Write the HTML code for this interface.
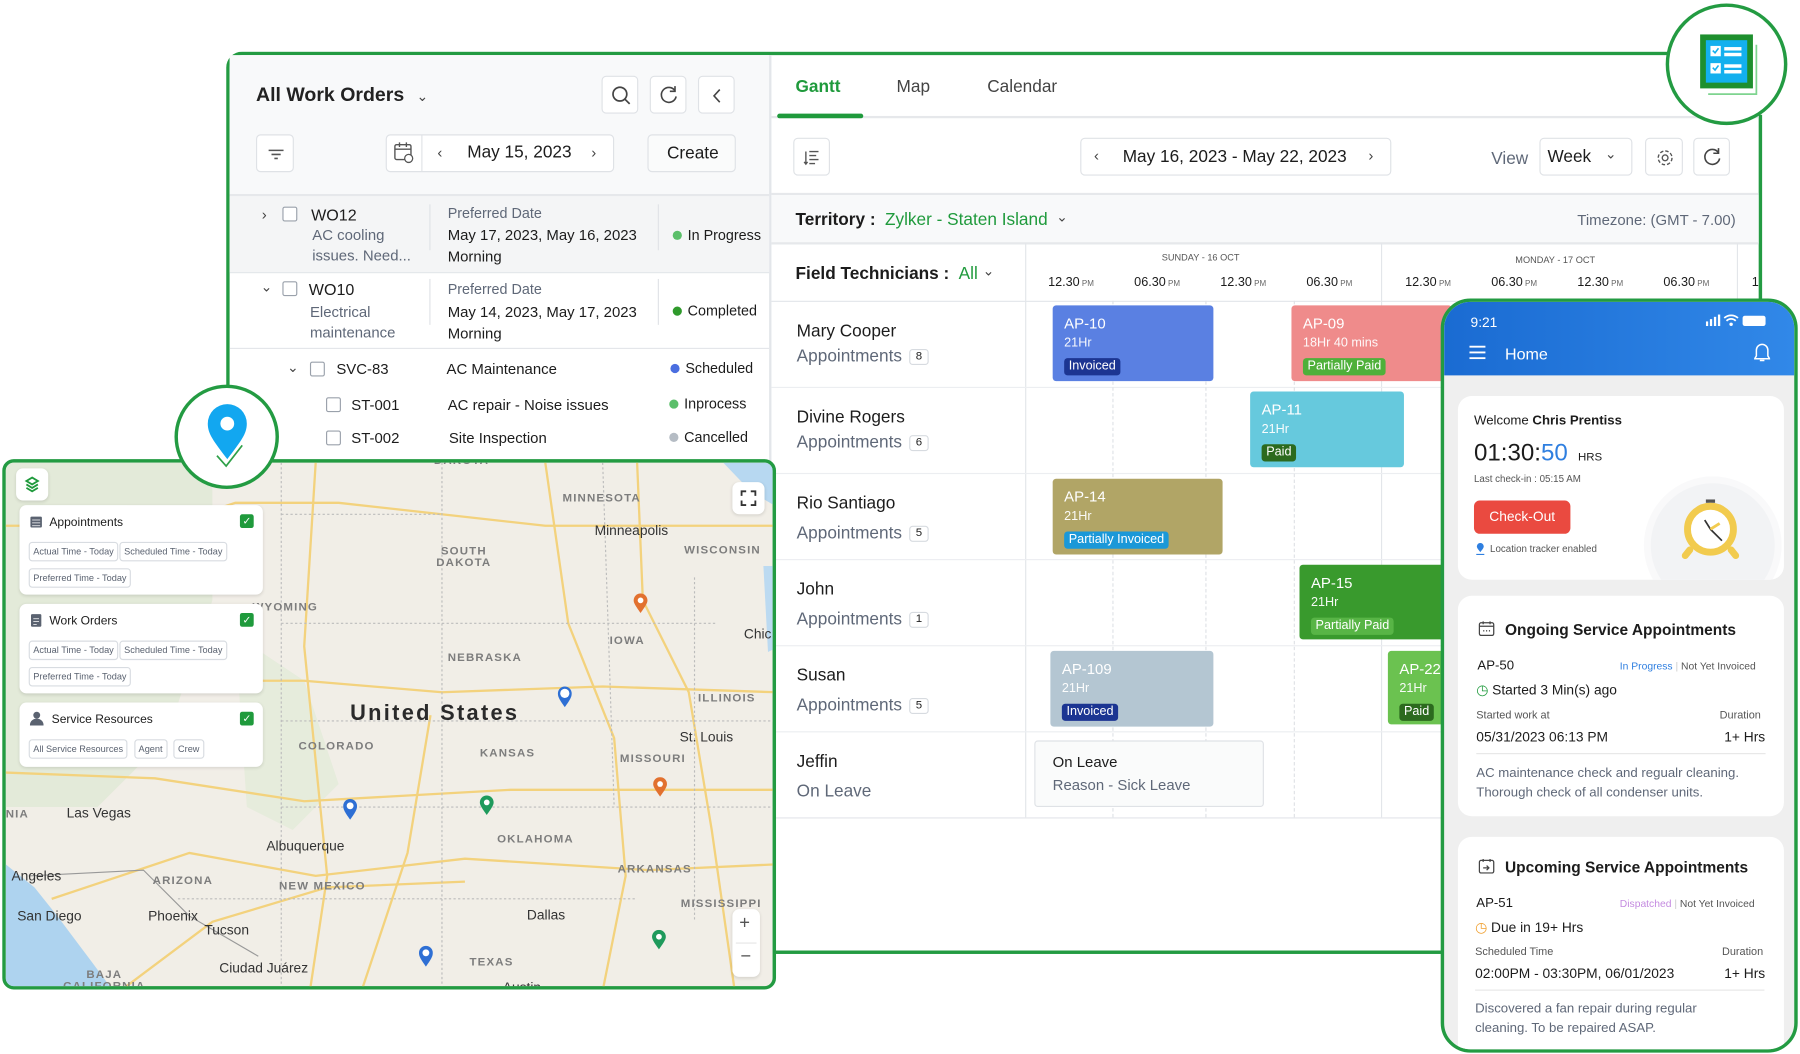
<!DOCTYPE html>
<html><head><meta charset="utf-8">
<style>
*{box-sizing:border-box;margin:0;padding:0}
html,body{width:1800px;height:1054px;overflow:hidden;background:#fff;font-family:"Liberation Sans",sans-serif;color:#1c1c1c}
.s{position:absolute;left:0;top:0;width:1568px;height:918px;transform:scale(1.14796);transform-origin:0 0}
.a{position:absolute}
.t{position:absolute;white-space:nowrap;line-height:1}
.g{color:#5f6878}
.btn{position:absolute;border:1px solid #dfe2e6;border-radius:4px;background:#fff}
.cb{position:absolute;width:13px;height:13px;border:1.3px solid #9aa1ab;border-radius:2px;background:#fff}
.dot{display:inline-block;width:8px;height:8px;border-radius:50%;margin-right:5px;vertical-align:0}
.bar{position:absolute;border-radius:3px;color:#fff;padding:9px 10px;font-size:13px;line-height:1;white-space:nowrap;overflow:hidden}
.bar .h{margin-top:6px;opacity:.95;font-size:11px}
.bdg{display:inline-block;margin-top:7px;padding:2px 4px;border-radius:3px;font-size:11px}
.cnt{display:inline-block;border:1px solid #d7dbe0;border-radius:3px;font-size:10px;padding:1px 5px;color:#222;margin-left:6px;vertical-align:2px}
.ml{position:absolute;white-space:nowrap;color:#7d7d7d;font-size:10px;font-weight:bold;letter-spacing:1px;line-height:1}
.mc{position:absolute;white-space:nowrap;color:#333;font-size:12px;line-height:1}
.card{position:absolute;background:#fff;border-radius:6px;box-shadow:0 1px 3px rgba(0,0,0,.12)}
.chip{display:inline-block;border:1px solid #d8dce1;border-radius:3px;font-size:8px;color:#5a6270;padding:3px 3px;margin:0 1px 4px 0;background:#fff}
.gck{position:absolute;width:12px;height:12px;background:#1f9a3c;border-radius:2px;color:#fff;font-size:9px;text-align:center;line-height:12px}
.pc{position:absolute;background:#fff;border-radius:12px}
.ro{font-family:"Liberation Sans",sans-serif}
</style></head><body><div class="s">

<!-- main panel -->
<div class="a" style="left:197px;top:45px;width:1338px;height:786px;border:3px solid #239b42;border-right:none;border-radius:14px 0 0 0;background:#fff"></div>
<div class="a" style="left:1532px;top:100px;width:3px;height:731px;background:#239b42"></div>
<div class="a" style="left:200px;top:48px;width:470px;height:122px;background:#f8f9fa"></div>
<div class="a" style="left:670px;top:48px;width:2px;height:780px;background:#e3e6ea"></div>

<!-- Work orders header -->
<div class="t" style="left:223px;top:74px;font-size:17px;font-weight:bold;color:#222">All Work Orders <span style="font-weight:normal;font-size:12px;margin-left:6px;color:#444">&#8964;</span></div>
<div class="btn" style="left:524px;top:66px;width:32px;height:33px"><svg width="32" height="33"><circle cx="15" cy="15" r="6" fill="none" stroke="#444" stroke-width="1.5"/><path d="M19.5 19.5l4 4" stroke="#444" stroke-width="1.5"/></svg></div>
<div class="btn" style="left:566px;top:66px;width:32px;height:33px"><svg width="32" height="33"><path d="M21 12a6.5 6.5 0 1 0 1 5" fill="none" stroke="#444" stroke-width="1.4"/><path d="M21 8v4.5h-4.5" fill="none" stroke="#444" stroke-width="1.4"/></svg></div>
<div class="btn" style="left:608px;top:66px;width:32px;height:33px"><svg width="32" height="33"><path d="M18 11l-5 5.5 5 5.5" fill="none" stroke="#444" stroke-width="1.4"/></svg></div>
<div class="btn" style="left:223px;top:117px;width:33px;height:33px"><svg width="33" height="33"><path d="M10 13h13M12.5 16.5h8M15 20h3" stroke="#555" stroke-width="1.4"/></svg></div>
<div class="btn" style="left:336px;top:117px;width:199px;height:33px"></div>
<div class="a" style="left:367px;top:118px;width:1px;height:31px;background:#e0e3e7"></div>
<svg class="a" style="left:342px;top:123px" width="20" height="20"><rect x="2" y="3" width="14" height="13" rx="1.5" fill="none" stroke="#555" stroke-width="1.2"/><path d="M2 7h14M6 1v4M12 1v4" stroke="#555" stroke-width="1.2"/><circle cx="14" cy="15" r="3.5" fill="#fff" stroke="#555" stroke-width="1.1"/></svg>
<div class="t" style="left:381px;top:126px;font-size:13px;color:#444">&#8249;</div>
<div class="t" style="left:407px;top:125px;font-size:15px">May 15, 2023</div>
<div class="t" style="left:515px;top:126px;font-size:13px;color:#444">&#8250;</div>
<div class="btn" style="left:564px;top:117px;width:77px;height:33px;background:#fafbfb"></div>
<div class="t" style="left:581px;top:126px;font-size:15px">Create</div>
<div class="a" style="left:200px;top:169px;width:470px;height:2px;background:#e6e8eb"></div>

<!-- WO12 -->
<div class="a" style="left:200px;top:171px;width:470px;height:66px;background:#f4f5f6"></div>
<div class="a" style="left:200px;top:237px;width:470px;height:1px;background:#e3e6ea"></div>
<div class="t" style="left:228px;top:180px;font-size:13px;color:#444">&#8250;</div>
<div class="cb" style="left:246px;top:180px"></div>
<div class="t" style="left:271px;top:180px;font-size:14px">WO12</div>
<div class="t g" style="left:272px;top:198px;font-size:13px">AC cooling</div>
<div class="t g" style="left:272px;top:216px;font-size:13px">issues. Need...</div>
<div class="a" style="left:374px;top:178px;width:1px;height:40px;background:#e0e3e7"></div>
<div class="t g" style="left:390px;top:180px;font-size:12.5px">Preferred Date</div>
<div class="t" style="left:390px;top:198px;font-size:13px">May 17, 2023, May 16, 2023</div>
<div class="t" style="left:390px;top:217px;font-size:13px">Morning</div>
<div class="a" style="left:573px;top:178px;width:1px;height:40px;background:#e0e3e7"></div>
<div class="t" style="left:586px;top:199px;font-size:12.5px"><span class="dot" style="background:#5bbf6a"></span>In Progress</div>
<!-- WO10 -->
<div class="t" style="left:227px;top:244px;font-size:12px;color:#444">&#8964;</div>
<div class="cb" style="left:246px;top:245px"></div>
<div class="t" style="left:269px;top:245px;font-size:14px">WO10</div>
<div class="t g" style="left:270px;top:265px;font-size:13px">Electrical</div>
<div class="t g" style="left:270px;top:283px;font-size:13px">maintenance</div>
<div class="a" style="left:374px;top:243px;width:1px;height:40px;background:#e0e3e7"></div>
<div class="t g" style="left:390px;top:246px;font-size:12.5px">Preferred Date</div>
<div class="t" style="left:390px;top:265px;font-size:13px">May 14, 2023, May 17, 2023</div>
<div class="t" style="left:390px;top:284px;font-size:13px">Morning</div>
<div class="a" style="left:573px;top:243px;width:1px;height:40px;background:#e0e3e7"></div>
<div class="t" style="left:586px;top:265px;font-size:12.5px"><span class="dot" style="background:#2f9a2c"></span>Completed</div>
<div class="a" style="left:200px;top:303px;width:470px;height:1px;background:#e3e6ea"></div>
<!-- SVC rows -->
<div class="t" style="left:250px;top:314px;font-size:12px;color:#444">&#8964;</div>
<div class="cb" style="left:270px;top:315px"></div>
<div class="t" style="left:293px;top:315px;font-size:13px">SVC-83</div>
<div class="t" style="left:389px;top:315px;font-size:13px">AC Maintenance</div>
<div class="t" style="left:584px;top:315px;font-size:12.5px"><span class="dot" style="background:#4a6ee0"></span>Scheduled</div>
<div class="cb" style="left:284px;top:346px"></div>
<div class="t" style="left:306px;top:346px;font-size:13px">ST-001</div>
<div class="t" style="left:390px;top:346px;font-size:13px">AC repair - Noise issues</div>
<div class="t" style="left:583px;top:346px;font-size:12.5px"><span class="dot" style="background:#5bbf6a"></span>Inprocess</div>
<div class="cb" style="left:284px;top:375px"></div>
<div class="t" style="left:306px;top:375px;font-size:13px">ST-002</div>
<div class="t" style="left:391px;top:375px;font-size:13px">Site Inspection</div>
<div class="t" style="left:583px;top:375px;font-size:12.5px"><span class="dot" style="background:#b5bcc4"></span>Cancelled</div>

<!-- Gantt tabs -->
<div class="t" style="left:693px;top:68px;font-size:15px;color:#1f9a3c;font-weight:bold">Gantt</div>
<div class="t" style="left:781px;top:68px;font-size:15px;color:#444">Map</div>
<div class="t" style="left:860px;top:68px;font-size:15px;color:#444">Calendar</div>
<div class="a" style="left:672px;top:101px;width:860px;height:2px;background:#e6e8eb"></div>
<div class="a" style="left:677px;top:99px;width:75px;height:4px;background:#1f9a3c;border-radius:2px"></div>
<!-- toolbar -->
<div class="btn" style="left:691px;top:120px;width:32px;height:33px"><svg width="32" height="33"><path d="M13 11h8M13 14.5h6M13 18h8M13 21.5h5M10 11v11M8.5 20l1.5 2 1.5-2" stroke="#555" stroke-width="1.2" fill="none"/></svg></div>
<div class="btn" style="left:941px;top:120px;width:271px;height:33px"></div>
<div class="t" style="left:953px;top:129px;font-size:13px;color:#444">&#8249;</div>
<div class="t" style="left:978px;top:129px;font-size:15px">May 16, 2023 - May 22, 2023</div>
<div class="t" style="left:1192px;top:129px;font-size:13px;color:#444">&#8250;</div>
<div class="t" style="left:1299px;top:131px;font-size:15px;color:#5f6878">View</div>
<div class="btn" style="left:1341px;top:120px;width:81px;height:33px"></div>
<div class="t" style="left:1348px;top:129px;font-size:15px">Week</div>
<div class="t" style="left:1398px;top:128px;font-size:12px;color:#444">&#8964;</div>
<div class="btn" style="left:1433px;top:120px;width:33px;height:33px"><svg width="33" height="33"><circle cx="16.5" cy="16.5" r="2.5" fill="none" stroke="#555" stroke-width="1.2"/><circle cx="16.5" cy="16.5" r="6" fill="none" stroke="#555" stroke-width="1.2" stroke-dasharray="3 1.7"/></svg></div>
<div class="btn" style="left:1475px;top:120px;width:32px;height:33px"><svg width="32" height="33"><path d="M21 12a6.5 6.5 0 1 0 1 5" fill="none" stroke="#444" stroke-width="1.4"/><path d="M21 8v4.5h-4.5" fill="none" stroke="#444" stroke-width="1.4"/></svg></div>
<!-- territory -->
<div class="a" style="left:672px;top:168px;width:860px;height:2px;background:#e6e8eb"></div>
<div class="a" style="left:672px;top:170px;width:860px;height:42px;background:#f8f9fa"></div>
<div class="t" style="left:693px;top:184px;font-size:15px;font-weight:bold">Territory : <span style="color:#1f9a3c;font-weight:normal;margin-left:4px">Zylker - Staten Island</span></div>
<div class="t" style="left:920px;top:183px;font-size:12px;color:#444">&#8964;</div>
<div class="t" style="left:1374px;top:185px;font-size:13px;color:#5f6878">Timezone: (GMT - 7.00)</div>
<div class="a" style="left:672px;top:211px;width:860px;height:2px;background:#e6e8eb"></div>
<!-- header row -->
<div class="t" style="left:693px;top:231px;font-size:15px;font-weight:bold">Field Technicians : <span style="color:#1f9a3c;font-weight:normal;margin-left:4px">All</span></div>
<div class="t" style="left:856px;top:230px;font-size:12px;color:#444">&#8964;</div>
<div class="a" style="left:893px;top:212px;width:1px;height:500px;background:#e3e6ea"></div>
<div class="a" style="left:1203px;top:212px;width:1px;height:500px;background:#e3e6ea"></div>
<div class="a" style="left:1513px;top:212px;width:1px;height:50px;background:#e3e6ea"></div>
<div class="t" style="left:1012px;top:221px;font-size:8px;color:#555">SUNDAY - 16 OCT</div>
<div class="t" style="left:1320px;top:223px;font-size:8px;color:#555">MONDAY - 17 OCT</div>
<div class="t" style="left:913px;top:241px;font-size:11px">12.30<span style="font-size:7px;color:#666"> PM</span></div>
<div class="t" style="left:988px;top:241px;font-size:11px">06.30<span style="font-size:7px;color:#666"> PM</span></div>
<div class="t" style="left:1063px;top:241px;font-size:11px">12.30<span style="font-size:7px;color:#666"> PM</span></div>
<div class="t" style="left:1138px;top:241px;font-size:11px">06.30<span style="font-size:7px;color:#666"> PM</span></div>
<div class="t" style="left:1224px;top:241px;font-size:11px">12.30<span style="font-size:7px;color:#666"> PM</span></div>
<div class="t" style="left:1299px;top:241px;font-size:11px">06.30<span style="font-size:7px;color:#666"> PM</span></div>
<div class="t" style="left:1374px;top:241px;font-size:11px">12.30<span style="font-size:7px;color:#666"> PM</span></div>
<div class="t" style="left:1449px;top:241px;font-size:11px">06.30<span style="font-size:7px;color:#666"> PM</span></div>
<div class="t" style="left:1526px;top:241px;font-size:11px">1</div>
<!-- grid -->
<div class="a" style="left:672px;top:262px;width:860px;height:1px;background:#e3e6ea"></div>
<div class="a" style="left:672px;top:337px;width:860px;height:1px;background:#eceef1"></div>
<div class="a" style="left:672px;top:412px;width:860px;height:1px;background:#eceef1"></div>
<div class="a" style="left:672px;top:487px;width:860px;height:1px;background:#eceef1"></div>
<div class="a" style="left:672px;top:562px;width:860px;height:1px;background:#eceef1"></div>
<div class="a" style="left:672px;top:637px;width:860px;height:1px;background:#eceef1"></div>
<div class="a" style="left:672px;top:712px;width:860px;height:1px;background:#e3e6ea"></div>
<div class="a" style="left:969px;top:262px;height:450px;border-left:1px dashed #dfe2e6"></div>
<div class="a" style="left:1050px;top:262px;height:450px;border-left:1px dashed #dfe2e6"></div>
<div class="a" style="left:1127px;top:262px;height:450px;border-left:1px dashed #dfe2e6"></div>
<!-- names -->
<div class="t" style="left:694px;top:281px;font-size:15px">Mary Cooper</div>
<div class="t g" style="left:694px;top:303px;font-size:15px">Appointments<span class="cnt">8</span></div>
<div class="t" style="left:694px;top:356px;font-size:15px">Divine Rogers</div>
<div class="t g" style="left:694px;top:378px;font-size:15px">Appointments<span class="cnt">6</span></div>
<div class="t" style="left:694px;top:431px;font-size:15px">Rio Santiago</div>
<div class="t g" style="left:694px;top:457px;font-size:15px">Appointments<span class="cnt">5</span></div>
<div class="t" style="left:694px;top:506px;font-size:15px">John</div>
<div class="t g" style="left:694px;top:532px;font-size:15px">Appointments<span class="cnt">1</span></div>
<div class="t" style="left:694px;top:581px;font-size:15px">Susan</div>
<div class="t g" style="left:694px;top:607px;font-size:15px">Appointments<span class="cnt">5</span></div>
<div class="t" style="left:694px;top:656px;font-size:15px">Jeffin</div>
<div class="t g" style="left:694px;top:682px;font-size:15px">On Leave</div>
<!-- bars -->
<div class="bar" style="left:917px;top:266px;width:140px;height:66px;background:#5a80e2">AP-10<div class="h">21Hr</div><span class="bdg" style="background:#1c3592">Invoiced</span></div>
<div class="bar" style="left:1125px;top:266px;width:140px;height:66px;background:#ef8b8b">AP-09<div class="h">18Hr 40 mins</div><span class="bdg" style="background:#4fb03a">Partially Paid</span></div>
<div class="bar" style="left:1089px;top:341px;width:134px;height:66px;background:#66c9dd">AP-11<div class="h">21Hr</div><span class="bdg" style="background:#2c6a1e">Paid</span></div>
<div class="bar" style="left:917px;top:417px;width:148px;height:66px;background:#b1a566">AP-14<div class="h">21Hr</div><span class="bdg" style="background:#1b98d8">Partially Invoiced</span></div>
<div class="bar" style="left:1132px;top:492px;width:133px;height:65px;background:#399a2d">AP-15<div class="h">21Hr</div><span class="bdg" style="background:#58b546">Partially Paid</span></div>
<div class="bar" style="left:915px;top:567px;width:142px;height:66px;background:#b4c6d2">AP-109<div class="h">21Hr</div><span class="bdg" style="background:#1c3592">Invoiced</span></div>
<div class="bar" style="left:1209px;top:567px;width:56px;height:64px;background:#6bc250">AP-22<div class="h">21Hr</div><span class="bdg" style="background:#2c6a1e">Paid</span></div>
<div class="a" style="left:901px;top:645px;width:200px;height:58px;border:1px solid #dfe2e6;border-radius:3px;background:#fafbfb"></div>
<div class="t" style="left:917px;top:657px;font-size:13px">On Leave</div>
<div class="t g" style="left:917px;top:677px;font-size:13px">Reason - Sick Leave</div>

<!-- map -->
<div class="a" style="left:2px;top:400px;width:674px;height:462px;border:3px solid #239b42;border-radius:10px;background:#f1eee7;overflow:hidden">
<svg class="a" style="left:0;top:0" width="674" height="462" viewBox="0 0 674 462">
<path d="M0 0h180v120l-40 120-60 60-80 0z" fill="#e3ead9"/>
<path d="M200 150l60 40 30 90-40 40-40-20z" fill="#e6ecdc"/>
<path d="M0 350l25 20 20 25 30 40 20 27H0z" fill="#aed3ef"/>
<path d="M625 0h49v40l-25-15z" fill="#b7d8f1"/>
<path d="M660 90l14 0 0 70l-10 5z" fill="#bcdaf1"/>
<g fill="none" stroke="#f3d27d" stroke-width="2">
<path d="M0 55h140l60-20 90 0 180 20 200 0"/><path d="M100 190h160l120 10 140 -5 150 5"/><path d="M0 270l130 5 130 20 180-10 230 0"/><path d="M40 380l120-40 110 20 130-15 160 10 110-5"/><path d="M270 0l-10 160 20 200 -15 100"/><path d="M470 0l20 140 40 100 10 120 -20 100"/><path d="M550 0l5 120 40 80 20 120 20 140"/><path d="M100 460l80-60 100-30 120 -5"/><path d="M370 220l-20 120 -40 120"/>
</g>
<g fill="none" stroke="#bcbcbc" stroke-width="1" stroke-dasharray="2 2">
<path d="M240 0v462"/><path d="M380 0v300"/><path d="M240 45h140M240 140h380M240 225h450M240 300h450M380 300v160M150 380h400"/><path d="M520 0l10 300"/><path d="M600 100v300"/>
</g>
<path d="M20 360l100 -5 40 40 60 35" fill="none" stroke="#999" stroke-width="1"/>
</svg>
<div class="ml" style="left:373px;top:-6px">DAKOTA</div>
<div class="ml" style="left:485px;top:27px">MINNESOTA</div>
<div class="mc" style="left:513px;top:53px">Minneapolis</div>
<div class="ml" style="left:375px;top:73px;text-align:center">SOUTH<br>DAKOTA</div>
<div class="ml" style="left:591px;top:72px">WISCONSIN</div>
<div class="ml" style="left:215px;top:122px">WYOMING</div>
<div class="ml" style="left:526px;top:151px">IOWA</div>
<div class="mc" style="left:643px;top:143px">Chic</div>
<div class="ml" style="left:385px;top:166px">NEBRASKA</div>
<div class="t" style="left:300px;top:209px;font-size:19px;font-weight:bold;letter-spacing:2px;color:#2a2a2a">United States</div>
<div class="ml" style="left:603px;top:201px">ILLINOIS</div>
<div class="mc" style="left:587px;top:233px">St. Louis</div>
<div class="ml" style="left:255px;top:243px">COLORADO</div>
<div class="ml" style="left:413px;top:249px">KANSAS</div>
<div class="ml" style="left:535px;top:254px">MISSOURI</div>
<div class="mc" style="left:53px;top:299px">Las Vegas</div>
<div class="ml" style="left:428px;top:324px">OKLAHOMA</div>
<div class="mc" style="left:227px;top:328px">Albuquerque</div>
<div class="mc" style="left:5px;top:354px">Angeles</div>
<div class="ml" style="left:128px;top:360px">ARIZONA</div>
<div class="ml" style="left:238px;top:365px">NEW MEXICO</div>
<div class="ml" style="left:533px;top:350px">ARKANSAS</div>
<div class="ml" style="left:588px;top:380px">MISSISSIPPI</div>
<div class="mc" style="left:10px;top:389px">San Diego</div>
<div class="mc" style="left:124px;top:389px">Phoenix</div>
<div class="mc" style="left:454px;top:388px">Dallas</div>
<div class="mc" style="left:173px;top:401px">Tucson</div>
<div class="ml" style="left:404px;top:431px">TEXAS</div>
<div class="mc" style="left:186px;top:434px">Ciudad Juárez</div>
<div class="ml" style="left:50px;top:442px;text-align:center">BAJA<br>CALIFORNIA</div>
<div class="mc" style="left:433px;top:451px">Austin</div>
<div class="ml" style="left:0px;top:302px">NIA</div>
<!-- pins -->
<svg class="a" style="left:546px;top:114px" width="14" height="18"><path d="M7 17C2 10 1 8 1 6a6 6 0 0 1 12 0c0 2-1 4-6 11z" fill="#e2712f"/><circle cx="7" cy="6" r="2.5" fill="#fff"/></svg>
<svg class="a" style="left:480px;top:194px" width="14" height="20"><path d="M7 19C2 12 1 10 1 7a6 6 0 0 1 12 0c0 3-1 5-6 12z" fill="#2e6fd4"/><circle cx="7" cy="7" r="4" fill="#fff"/></svg>
<svg class="a" style="left:563px;top:274px" width="14" height="18"><path d="M7 17C2 10 1 8 1 6a6 6 0 0 1 12 0c0 2-1 4-6 11z" fill="#e2712f"/><circle cx="7" cy="6" r="2.5" fill="#fff"/></svg>
<svg class="a" style="left:412px;top:290px" width="14" height="18"><path d="M7 17C2 10 1 8 1 6a6 6 0 0 1 12 0c0 2-1 4-6 11z" fill="#1f9a5c"/><circle cx="7" cy="6" r="2.5" fill="#fff"/></svg>
<svg class="a" style="left:293px;top:292px" width="14" height="20"><path d="M7 19C2 12 1 10 1 7a6 6 0 0 1 12 0c0 3-1 5-6 12z" fill="#2e6fd4"/><circle cx="7" cy="7" r="3" fill="#fff"/></svg>
<svg class="a" style="left:562px;top:407px" width="14" height="18"><path d="M7 17C2 10 1 8 1 6a6 6 0 0 1 12 0c0 2-1 4-6 11z" fill="#1f9a5c"/><circle cx="7" cy="6" r="2.5" fill="#fff"/></svg>
<svg class="a" style="left:359px;top:420px" width="14" height="20"><path d="M7 19C2 12 1 10 1 7a6 6 0 0 1 12 0c0 3-1 5-6 12z" fill="#2e6fd4"/><circle cx="7" cy="7" r="3" fill="#fff"/></svg>
<!-- controls -->
<div class="card" style="left:9px;top:5px;width:28px;height:28px"><svg width="28" height="28"><path d="M14 8l5 3-5 3-5-3zM9 14l5 3 5-3M9 17l5 3 5-3" fill="none" stroke="#1f9a3c" stroke-width="1.6"/></svg></div>
<div class="card" style="left:633px;top:17px;width:28px;height:28px"><svg width="28" height="28"><path d="M8 12V8h4M16 8h4v4M20 16v4h-4M12 20H8v-4" fill="none" stroke="#333" stroke-width="1.6"/></svg></div>
<div class="card" style="left:633px;top:389px;width:24px;height:59px"><div class="t" style="left:6px;top:5px;font-size:16px;color:#555">+</div><div class="a" style="left:3px;top:29px;width:18px;height:1px;background:#e5e5e5"></div><div class="t" style="left:7px;top:34px;font-size:16px;color:#555">−</div></div>
<!-- filter cards -->
<div class="card" style="left:12px;top:37px;width:212px;height:78px">
<svg class="a" style="left:9px;top:9px" width="11" height="11"><rect x=".5" y="1" width="10" height="9.5" rx="1" fill="#5a6270"/><path d="M2 4h7M2 6.5h7M2 9h7" stroke="#fff" stroke-width=".6"/></svg>
<div class="t" style="left:26px;top:10px;font-size:10.5px">Appointments</div><div class="gck" style="left:192px;top:8px">&#10003;</div>
<div class="a" style="left:8px;top:30px;width:200px"><span class="chip">Actual Time - Today</span><span class="chip">Scheduled Time - Today</span><span class="chip">Preferred Time - Today</span></div></div>
<div class="card" style="left:12px;top:123px;width:212px;height:78px">
<svg class="a" style="left:9px;top:8px" width="11" height="13"><rect x="1" y="1" width="9" height="11" rx="1" fill="#5a6270"/><path d="M3 5h5M3 7.5h5M3 10h3" stroke="#fff" stroke-width=".7"/></svg>
<div class="t" style="left:26px;top:10px;font-size:10.5px">Work Orders</div><div class="gck" style="left:192px;top:8px">&#10003;</div>
<div class="a" style="left:8px;top:30px;width:200px"><span class="chip">Actual Time - Today</span><span class="chip">Scheduled Time - Today</span><span class="chip">Preferred Time - Today</span></div></div>
<div class="card" style="left:12px;top:209px;width:212px;height:56px">
<svg class="a" style="left:9px;top:7px" width="12" height="13"><circle cx="6" cy="4" r="3" fill="#5a6270"/><path d="M0 13c0-4 3-6 6-6s6 2 6 6z" fill="#5a6270"/></svg>
<div class="t" style="left:28px;top:10px;font-size:10.5px">Service Resources</div><div class="gck" style="left:192px;top:8px">&#10003;</div>
<div class="a" style="left:8px;top:30px;width:205px"><span class="chip">All Service Resources</span> <span class="chip">Agent</span> <span class="chip">Crew</span></div></div>
</div>

<!-- pin circle -->
<div class="a" style="left:152px;top:335px;width:91px;height:91px;border:3px solid #239b42;border-radius:50%;background:#fff"></div>
<svg class="a" style="left:176px;top:350px" width="44" height="62"><path d="M22 50C10 34 5 28 5 19a17 17 0 0 1 34 0c0 9-5 15-17 31z" fill="#12a7f0"/><circle cx="22" cy="19" r="6" fill="#fff"/><path d="M13 47l8 9 14-18" fill="none" stroke="#2ea048" stroke-width="1.5"/></svg>

<!-- checklist circle -->
<div class="a" style="left:1451px;top:3px;width:106px;height:106px;border:3px solid #239b42;border-radius:50%;background:#fff"></div>
<svg class="a" style="left:1478px;top:27px" width="56" height="60"><path d="M52 12v43H10" fill="none" stroke="#7ed48f" stroke-width="1.5"/><rect x="3" y="3" width="46" height="47" fill="#1e8f2e"/><rect x="8" y="8" width="36" height="37" fill="#13b0ee"/><rect x="12" y="13" width="9" height="9" fill="#fff"/><rect x="12" y="28" width="9" height="9" fill="#fff"/><path d="M14 17l2 2 3-4M14 32l2 2 3-4" stroke="#13b0ee" stroke-width="1.4" fill="none"/><rect x="24" y="14" width="15" height="3" fill="#fff"/><rect x="24" y="19" width="15" height="3" fill="#fff"/><rect x="24" y="29" width="15" height="3" fill="#fff"/><rect x="24" y="34" width="15" height="3" fill="#fff"/></svg>

<!-- phone -->
<div class="a" style="left:1255px;top:260px;width:311px;height:657px;border:3px solid #239b42;border-radius:26px;background:#efefef;overflow:hidden">
<div class="a" style="left:0;top:0;width:305px;height:64px;background:linear-gradient(90deg,#1a6bd2,#3188e8)"></div>
<div class="t ro" style="left:23px;top:12px;font-size:12px;color:#fff">9:21</div>
<svg class="a" style="left:228px;top:10px" width="55" height="12"><rect x="0" y="7" width="2" height="4" fill="#fff"/><rect x="3.5" y="5" width="2" height="6" fill="#fff"/><rect x="7" y="3" width="2" height="8" fill="#fff"/><rect x="10.5" y="1" width="2" height="10" fill="#fff"/><path d="M16 4a9 9 0 0 1 12 0M18 6.5a5.5 5.5 0 0 1 8 0" stroke="#fff" stroke-width="1.5" fill="none"/><circle cx="22" cy="9.5" r="1.5" fill="#fff"/><rect x="32" y="2" width="20" height="9" rx="2" fill="#fff"/></svg>
<svg class="a" style="left:22px;top:38px" width="14" height="12"><path d="M0 1h14M0 6h14M0 11h14" stroke="#fff" stroke-width="1.7"/></svg>
<div class="t ro" style="left:53px;top:38px;font-size:14px;color:#fff">Home</div>
<svg class="a" style="left:270px;top:36px" width="14" height="17"><path d="M7 1a5 5 0 0 0-5 5v5l-1.5 2.5h13L12 11V6a5 5 0 0 0-5-5zM5 15h4" fill="none" stroke="#fff" stroke-width="1.3"/></svg>
<!-- card1 -->
<div class="pc" style="left:12px;top:82px;width:284px;height:160px;overflow:hidden">
<div class="a" style="left:162px;top:70px;width:120px;height:120px;border-radius:50%;background:#f2f3f5;border:6px solid #f9f9fa"></div>
<svg class="a" style="left:192px;top:90px" width="60" height="60"><rect x="24" y="0" width="8" height="3" fill="#555"/><circle cx="28" cy="26" r="20" fill="#fff" stroke="#f2cb4e" stroke-width="6"/><path d="M10 44l-4 5M46 44l4 5" stroke="#f2cb4e" stroke-width="6" stroke-linecap="round"/><path d="M28 26l-5 -8M28 26l10 10" stroke="#333" stroke-width="1.5"/><path d="M28 26l8-5" stroke="#f2cb4e" stroke-width="2.5"/></svg>
<div class="t ro" style="left:14px;top:17px;font-size:11.5px">Welcome <b style="font-weight:600">Chris Prentiss</b></div>
<div class="t ro" style="left:14px;top:39px;font-size:21px">01:30:<span style="color:#2f7fe0">50</span> <span style="font-size:10px;margin-left:3px">HRS</span></div>
<div class="t ro" style="left:14px;top:68px;font-size:8.5px;color:#555">Last check-in : 05:15 AM</div>
<div class="a" style="left:14px;top:91px;width:84px;height:29px;border-radius:5px;background:#ea4a40;color:#fff;font-size:12px;text-align:center;line-height:29px">Check-Out</div>
<svg class="a" style="left:15px;top:128px" width="9" height="11"><path d="M4.5 8C2 5 1.5 4 1.5 3a3 3 0 0 1 6 0c0 1-.5 2-3 5z" fill="#2f7fe0"/><path d="M1 10h7" stroke="#2f7fe0" stroke-width="1"/></svg>
<div class="t ro" style="left:28px;top:129px;font-size:8.5px;color:#555">Location tracker enabled</div>
</div>
<!-- card2 -->
<div class="pc" style="left:12px;top:256px;width:284px;height:192px">
<svg class="a" style="left:18px;top:22px" width="14" height="13"><rect x=".7" y="1.5" width="12.5" height="11" rx="1.5" fill="none" stroke="#444" stroke-width="1.1"/><path d="M.7 4.5h12.5M4 .3v2.5M10 .3v2.5" stroke="#444" stroke-width="1.1"/><path d="M4 8.5h1M6.5 8.5h1M9 8.5h1" stroke="#444" stroke-width="1.2"/></svg>
<div class="t ro" style="left:41px;top:23px;font-size:13.5px;font-weight:bold">Ongoing Service Appointments</div>
<div class="t ro" style="left:17px;top:56px;font-size:11.5px">AP-50</div>
<div class="t ro" style="left:141px;top:57px;font-size:9px;color:#2f7fe0">In Progress <span style="color:#ccc">|</span> <span style="color:#555">Not Yet Invoiced</span></div>
<div class="t ro" style="left:16px;top:76px;font-size:12px"><span style="color:#1f9a3c">&#9719;</span> Started 3 Min(s) ago</div>
<div class="t ro" style="left:16px;top:100px;font-size:9.5px;color:#555">Started work at</div>
<div class="t ro" style="left:228px;top:100px;font-size:9.5px;color:#555">Duration</div>
<div class="t ro" style="left:16px;top:117px;font-size:12px">05/31/2023 06:13 PM</div>
<div class="t ro" style="left:232px;top:117px;font-size:12px">1+ Hrs</div>
<div class="a" style="left:16px;top:137px;width:252px;height:1px;background:#e6e6e6"></div>
<div class="t ro" style="left:16px;top:147px;font-size:11.5px;color:#5f6878;line-height:17px">AC maintenance check and regualr cleaning.<br>Thorough check of all condenser units.</div>
</div>
<!-- card3 -->
<div class="pc" style="left:12px;top:466px;width:284px;height:200px">
<svg class="a" style="left:18px;top:19px" width="14" height="13"><rect x=".7" y="1.5" width="12.5" height="11" rx="1.5" fill="none" stroke="#444" stroke-width="1.1"/><path d="M4 .3v2.5M10 .3v2.5M4 8h5M7 6l2 2-2 2" stroke="#444" stroke-width="1.1" fill="none"/></svg>
<div class="t ro" style="left:41px;top:20px;font-size:13.5px;font-weight:bold">Upcoming Service Appointments</div>
<div class="t ro" style="left:16px;top:53px;font-size:11.5px">AP-51</div>
<div class="t ro" style="left:141px;top:54px;font-size:9px;color:#c48be0">Dispatched <span style="color:#ccc">|</span> <span style="color:#555">Not Yet Invoiced</span></div>
<div class="t ro" style="left:15px;top:73px;font-size:12px"><span style="color:#f0a030">&#9719;</span> Due in 19+ Hrs</div>
<div class="t ro" style="left:15px;top:96px;font-size:9.5px;color:#555">Scheduled Time</div>
<div class="t ro" style="left:230px;top:96px;font-size:9.5px;color:#555">Duration</div>
<div class="t ro" style="left:15px;top:113px;font-size:12px">02:00PM - 03:30PM, 06/01/2023</div>
<div class="t ro" style="left:232px;top:113px;font-size:12px">1+ Hrs</div>
<div class="a" style="left:15px;top:133px;width:252px;height:1px;background:#e6e6e6"></div>
<div class="t ro" style="left:15px;top:142px;font-size:11.5px;color:#5f6878;line-height:17px">Discovered a fan repair during regular<br>cleaning. To be repaired ASAP.</div>
</div>
</div>

</div></body></html>
